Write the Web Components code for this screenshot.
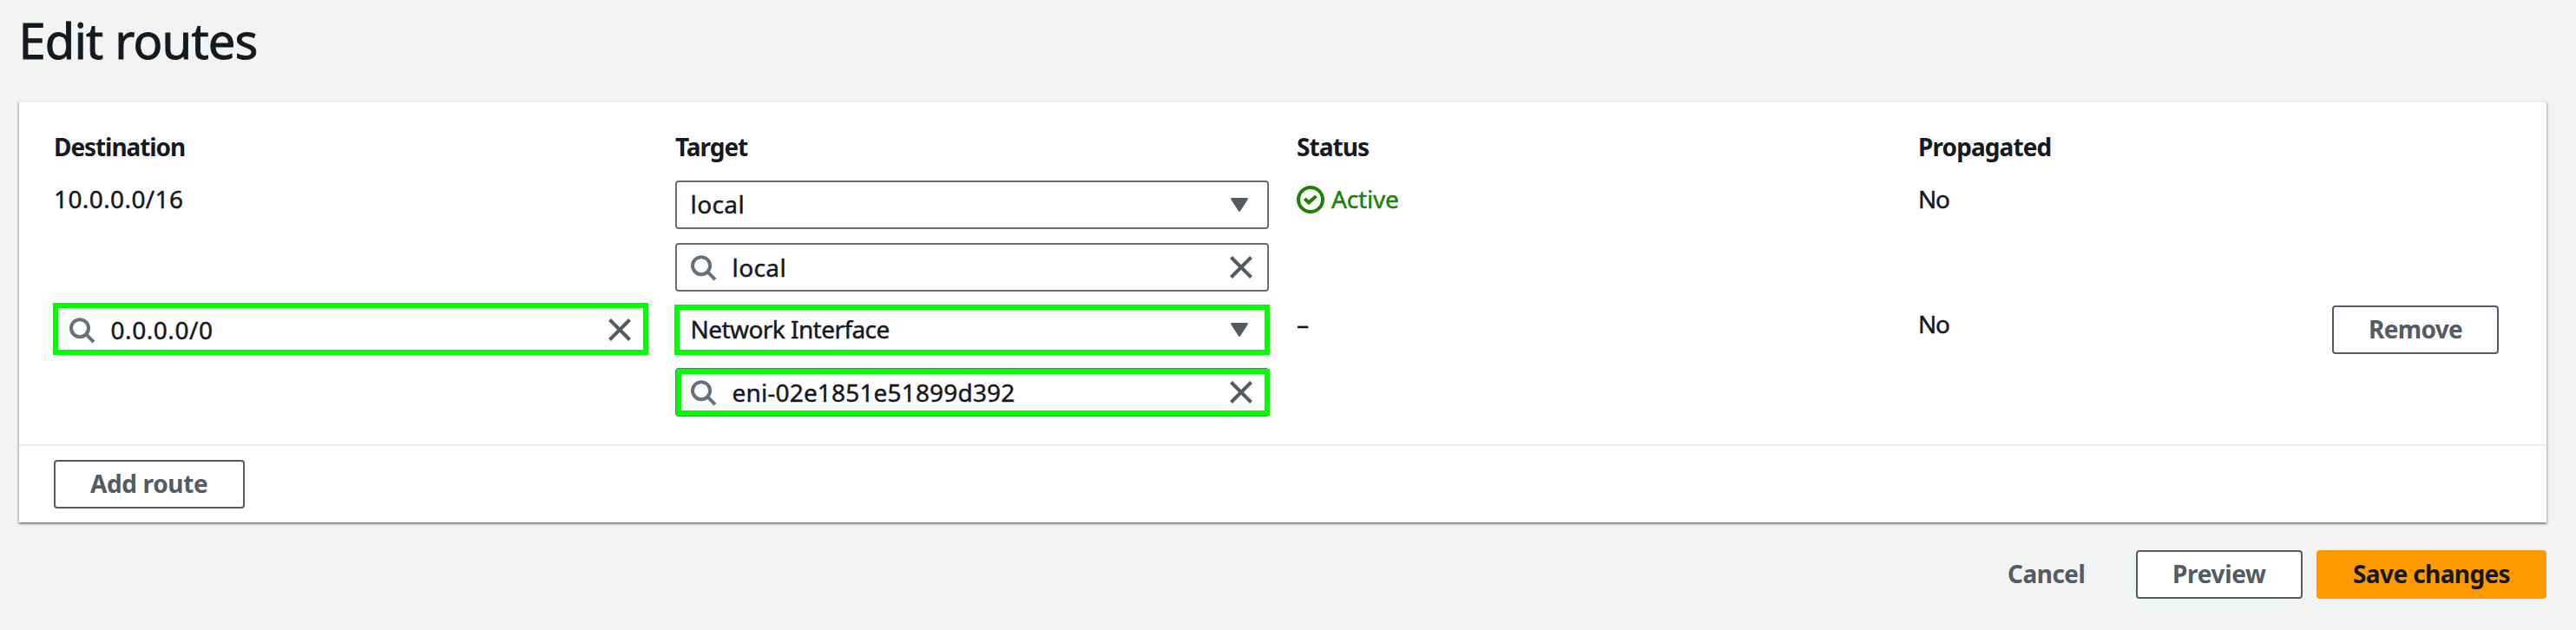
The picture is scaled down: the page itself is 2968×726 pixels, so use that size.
<!DOCTYPE html>
<html lang="en">
<head>
<meta charset="utf-8">
<title>Edit routes</title>
<style>
html, body { margin: 0; padding: 0; background: #f2f3f3; }
</style>
</head>
<body>
<edit-routes-page></edit-routes-page>
<script>
const define = (name, html, setup) => customElements.define(name, class extends HTMLElement {
  connectedCallback() {
    if (this.shadowRoot) return;
    const tpl = document.createElement('template');
    tpl.innerHTML = html;
    this.attachShadow({ mode: 'open' }).append(tpl.content.cloneNode(true));
    if (setup) setup(this);
  }
});

/* Text run with its own tracking: <ui-text track="-0.5"> */
define('ui-text', `
<style>:host { display: block; white-space: nowrap; letter-spacing: var(--track, 0); }</style>
<slot></slot>`, el => {
  el.style.setProperty('--track', (el.getAttribute('track') || 0) + 'px');
});

const icons = {
  search: `<circle cx="14" cy="14.2" r="10" stroke="#687078"/><path d="M21 21.2 30 30.2" stroke="#687078"/>`,
  close: `<path d="M4.5 4.5 27.5 27.5M27.5 4.5 4.5 27.5" stroke="#545b64"/>`,
  caret: `<path d="M7.2 9.2H24.8L16 22.6Z" fill="#545b64" stroke="#545b64" stroke-width="2.4" stroke-linejoin="round"/>`,
  success: `<circle cx="16" cy="16" r="14" stroke="#1d8102"/><path d="M9.2 15 14 19.6 22.4 12" stroke="#1d8102"/>`
};
define('ui-icon', `
<style>:host { display: block; flex: none; width: 32px; height: 32px; } svg { display: block; }</style>
<svg width="32" height="32" viewBox="0 0 32 32" fill="none" stroke-width="4"></svg>`, el => {
  el.shadowRoot.querySelector('svg').innerHTML = icons[el.getAttribute('name')];
});

define('ui-button', `
<style>
:host { display: block; box-sizing: border-box; height: 56px; padding: 4px 0 0 40px;
  border: 2px solid #545b64; border-radius: 4px; background: #fff; color: #545b64;
  font-weight: 700; line-height: 42px; white-space: nowrap; -webkit-text-stroke: 0; }
:host([variant=link]) { border-color: transparent; background: transparent; }
:host([variant=primary]) { border-color: #ff9900; background: #ff9900; color: #16191f; }
</style>
<slot></slot>`);

const highlight = `
:host([highlight])::after { content: ""; position: absolute; box-sizing: border-box; inset: -3px; border: 6px solid #00ff00; }
:host([highlight=tall])::after { top: -5px; }
:host([highlight=inner])::after { inset: -1px -3px -1px -1px; }`;

define('ui-select', `
<style>
:host { position: relative; display: flex; justify-content: space-between; box-sizing: border-box; height: 56px;
  padding: 4px 16px 0 15.5px; border: 2px solid #687078; border-radius: 4px; background: #fff; line-height: 42px; }
ui-icon { margin-top: 6px; }
${highlight}
</style>
<slot></slot><ui-icon name="caret"></ui-icon>`);

define('ui-search', `
<style>
:host { position: relative; display: flex; box-sizing: border-box; height: 56px;
  padding: 4px 14px 0; border: 2px solid #687078; border-radius: 4px; background: #fff; line-height: 44px; }
ui-icon { margin-top: 6px; }
.value { flex: 1; margin-left: 17.5px; }
${highlight}
</style>
<ui-icon name="search"></ui-icon><div class="value"><slot></slot></div><ui-icon name="close"></ui-icon>`);

define('status-indicator', `
<style>:host { display: flex; gap: 8px; color: #1d8102; } ui-icon { margin-top: 6px; }</style>
<ui-icon name="success"></ui-icon><slot></slot>`);

define('route-row', `
<style>
:host { display: grid; grid-template-columns: 684px 684px 684px 445px 192px; column-gap: 32px; align-items: start; line-height: 42px; }
:host([head]) { font-weight: 700; -webkit-text-stroke: 0; }
</style>
<slot></slot>`);

define('field-stack', `<style>:host { display: grid; gap: 16px; }</style><slot></slot>`);

define('ui-card', `
<style>
:host { display: block; background: #fff; border-top: 2px solid #eaeded;
  box-shadow: 0 2px 2px 0 rgba(0,28,36,.3), 2px 2px 2px 0 rgba(0,28,36,.15), -2px 2px 2px 0 rgba(0,28,36,.15); }
.body { padding: 30px 40px 32px; }
.footer { display: flex; padding: 16px 40px; border-top: 2px solid #eaeded; }
</style>
<div class="body"><slot></slot></div>
<div class="footer"><slot name="footer"></slot></div>`);

define('edit-routes-page', `
<style>
:host { display: block; box-sizing: border-box; width: 2968px; height: 726px; padding: 10px 34px 0 22px; overflow: hidden;
  background: #f2f3f3; color: #16191f; font: 400 28px "Noto Sans", sans-serif; -webkit-text-stroke: 0.45px currentColor; }
h1 { margin: 0 0 34px -0.5px; font-size: 56px; font-weight: 400; line-height: 72px; -webkit-text-stroke-width: 0.9px; }
.rows { display: grid; gap: 16px; }
.rows route-row[head] { margin-bottom: 2px; }
.actions { display: flex; justify-content: flex-end; gap: 16px; margin-top: 32px; }
</style>
<h1><ui-text track="-0.8">Edit routes</ui-text></h1>
<ui-card>
  <div class="rows">
    <route-row head>
      <ui-text track="-1.08">Destination</ui-text>
      <ui-text track="-1.06">Target</ui-text>
      <ui-text track="-0.94">Status</ui-text>
      <ui-text track="-0.9">Propagated</ui-text>
    </route-row>
    <route-row>
      <ui-text track="0.4">10.0.0.0/16</ui-text>
      <field-stack>
        <ui-select><ui-text track="0.42">local</ui-text></ui-select>
        <ui-search><ui-text track="0.42">local</ui-text></ui-search>
      </field-stack>
      <status-indicator><ui-text track="-0.18">Active</ui-text></status-indicator>
      <ui-text track="-1.3">No</ui-text>
    </route-row>
    <route-row>
      <ui-search highlight="tall"><ui-text track="0.56">0.0.0.0/0</ui-text></ui-search>
      <field-stack>
        <ui-select highlight><ui-text track="-0.56">Network Interface</ui-text></ui-select>
        <ui-search highlight="inner"><ui-text track="0.17">eni-02e1851e51899d392</ui-text></ui-search>
      </field-stack>
      <ui-text>–</ui-text>
      <ui-text track="-1.3">No</ui-text>
      <ui-button><ui-text track="-0.66">Remove</ui-text></ui-button>
    </route-row>
  </div>
  <ui-button slot="footer" style="width:220px"><ui-text track="-0.36">Add route</ui-text></ui-button>
</ui-card>
<div class="actions">
  <ui-button variant="link" style="width:174px"><ui-text track="-0.52">Cancel</ui-text></ui-button>
  <ui-button style="width:192px"><ui-text track="-0.33">Preview</ui-text></ui-button>
  <ui-button variant="primary" style="width:265px"><ui-text track="-0.6">Save changes</ui-text></ui-button>
</div>`);
</script>
</body>
</html>
